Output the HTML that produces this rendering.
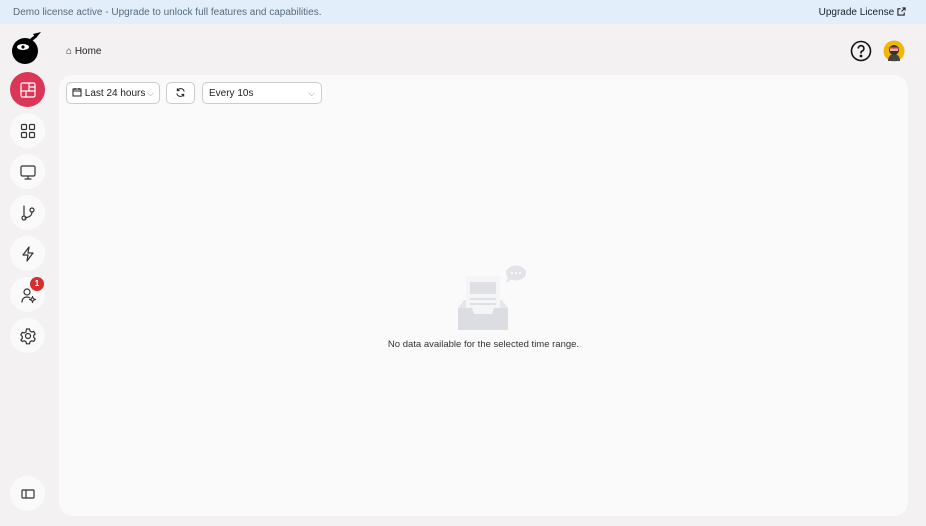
<!DOCTYPE html>
<html><head><meta charset="utf-8"><style>
*{box-sizing:border-box;margin:0;padding:0}
body{width:926px;height:526px;overflow:hidden;background:#f3f1f1;font-family:"Liberation Sans",sans-serif;position:relative}
.banner{position:absolute;left:0;top:0;width:926px;height:24px;background:#e2eefa;font-size:10px;color:#5a6b7b;line-height:25px;padding-left:13px}
.banner .up{position:absolute;right:20px;top:0;color:#1a2330}
.nav{position:absolute;left:10px;width:35px;height:35px;border-radius:50%;background:#fafafa;display:flex;align-items:center;justify-content:center}
.nav svg{width:18px;height:18px;fill:none;stroke:#333;stroke-width:1.2;stroke-linecap:round;stroke-linejoin:round}
.panel{position:absolute;left:59px;top:75px;width:849px;height:441px;background:#fafafa;border-radius:14px}
.btn{position:absolute;top:82px;height:22px;border:1px solid #ccc;border-radius:5px;background:#fff;font-size:10px;color:#222;line-height:21px}
.msg{position:absolute;left:59px;width:849px;top:339px;text-align:center;font-size:9.5px;color:#333}
</style></head><body>
<div class="banner">Demo license active - Upgrade to unlock full features and capabilities.<span class="up">Upgrade License <svg width="9" height="9" viewBox="0 0 10 10" style="vertical-align:-1px" fill="none" stroke="#222" stroke-width="1.2"><path d="M8 6v3H1V2h3M6 1h3v3M9 1L5 5"/></svg></span></div>
<svg style="position:absolute;left:11px;top:32px" width="32" height="32" viewBox="0 0 32 32"><path d="M22 2l8-2-5 6z" fill="#000"/><circle cx="14" cy="19" r="13" fill="#000"/><ellipse cx="12" cy="15" rx="6" ry="3" fill="#fff"/><circle cx="12" cy="15" r="1.6" fill="#000"/><path d="M20 8l5-4" stroke="#000" stroke-width="3"/></svg>
<div style="position:absolute;left:66px;top:46px;font-size:10px;color:#222">⌂ Home</div>
<svg style="position:absolute;left:850px;top:40px" width="22" height="22" viewBox="0 0 22 22" fill="none" stroke="#111" stroke-width="1.6"><circle cx="11" cy="11" r="9.5"/><path d="M8.3 8.5a2.8 2.8 0 1 1 3.7 2.6c-.7.3-1 .8-1 1.6v.8"/><circle cx="11" cy="16" r=".6" fill="#111"/></svg>
<svg style="position:absolute;left:883px;top:40px" width="22" height="22" viewBox="0 0 22 22"><circle cx="11" cy="11" r="10.5" fill="#f2b705"/><path d="M5 21c0-5 3-7 6-7s6 2 6 7z" fill="#444"/><circle cx="11" cy="10" r="5" fill="#333"/><rect x="7" y="8.5" width="8" height="2.5" fill="#f0b0a0"/><rect x="6" y="7" width="10" height="1.5" fill="#d33"/></svg>
<div class="nav" style="top:72px;background:#dc3657"><svg viewBox="0 0 18 18" style="stroke:#fff"><rect x="2" y="2" width="14" height="14" rx="1.5"/><path d="M2 10h14M10 2v8M7 10v6M10 6h6"/></svg></div>
<div class="nav" style="top:113px"><svg viewBox="0 0 18 18"><rect x="2.5" y="2.5" width="5" height="5" rx="1"/><rect x="10.5" y="2.5" width="5" height="5" rx="1"/><rect x="2.5" y="10.5" width="5" height="5" rx="1"/><rect x="10.5" y="10.5" width="5" height="5" rx="1"/></svg></div>
<div class="nav" style="top:154px"><svg viewBox="0 0 18 18"><rect x="2" y="3" width="14" height="10" rx="1.5"/><path d="M9 13v3M6 16h6"/></svg></div>
<div class="nav" style="top:195px"><svg viewBox="0 0 18 18"><path d="M5 2v9"/><circle cx="5" cy="14" r="2"/><circle cx="13" cy="6" r="2"/><path d="M13 8c0 4-3 5-7 6"/></svg></div>
<div class="nav" style="top:236px"><svg viewBox="0 0 18 18"><path d="M10 2L4 10h5l-1 6 6-8H9z"/></svg></div>
<div class="nav" style="top:277px"><svg viewBox="0 0 18 18"><circle cx="8" cy="6" r="3"/><path d="M3 16c0-3 2-5 5-5 1 0 2 .3 2.6.7"/><circle cx="13.5" cy="13.5" r="1.6"/><path d="M13.5 10.5v1M13.5 15.5v1M10.5 13.5h1M15.5 13.5h1"/></svg></div>
<div style="position:absolute;left:30px;top:277px;width:14px;height:14px;border-radius:50%;background:#d32f2f;color:#fff;font-size:8px;font-weight:bold;text-align:center;line-height:14px">1</div>
<div class="nav" style="top:318px"><svg viewBox="0 0 18 18"><circle cx="9" cy="9" r="2.5"/><path d="M7.5 2h3l.5 2 1.7 1 2-.6 1.5 2.6-1.5 1.4v2l1.5 1.4-1.5 2.6-2-.6-1.7 1-.5 2h-3l-.5-2-1.7-1-2 .6L1.8 13l1.5-1.4v-2L1.8 7.9 3.3 5.3l2 .6L7 5z"/></svg></div>
<div class="nav" style="top:476px"><svg viewBox="0 0 18 18"><rect x="3" y="5" width="12" height="8" rx="1"/><path d="M7 5v8"/></svg></div>
<div class="panel"></div>
<div class="btn" style="left:66px;width:94px;padding-left:5px"><svg width="10" height="10" viewBox="0 0 10 10" fill="none" stroke="#222" style="vertical-align:-1px"><rect x="1" y="2" width="8" height="7"/><path d="M1 4h8M3 1v2M7 1v2"/></svg> Last 24 hours <span style="position:absolute;right:5px;color:#999;font-size:9px">⌵</span></div>
<div class="btn" style="left:166px;width:29px;text-align:center"><svg width="11" height="11" viewBox="0 0 12 12" fill="none" stroke="#222" stroke-width="1.1" style="vertical-align:-2px"><path d="M10 5A4 4 0 0 0 2.5 4M2 7a4 4 0 0 0 7.5 1M2.5 1.5v2.5H5M9.5 10.5V8H7"/></svg></div>
<div class="btn" style="left:202px;width:120px;padding-left:6px">Every 10s<span style="position:absolute;right:6px;color:#999;font-size:9px">⌵</span></div>
<svg style="position:absolute;left:456px;top:262px" width="72" height="70" viewBox="0 0 72 70"><ellipse cx="60" cy="11" rx="10" ry="7.5" fill="#e3e4e8"/><path d="M52 15l-2 6 6-4z" fill="#e3e4e8"/><circle cx="56" cy="11" r="1" fill="#fff"/><circle cx="60" cy="11" r="1" fill="#fff"/><circle cx="64" cy="11" r="1" fill="#fff"/><path d="M2 46l6-8h38l6 8v20H2z" fill="#e6e7eb"/><rect x="10" y="14" width="34" height="40" fill="#f5f5f7"/><rect x="14" y="20" width="26" height="12" fill="#dfe0e4"/><rect x="14" y="36" width="26" height="2" fill="#dfe0e4"/><rect x="14" y="41" width="26" height="2" fill="#dfe0e4"/><path d="M2 46h14l2 6h18l2-6h14v22H2z" fill="#dcdde2"/></svg>
<div class="msg">No data available for the selected time range.</div>
</body></html>
